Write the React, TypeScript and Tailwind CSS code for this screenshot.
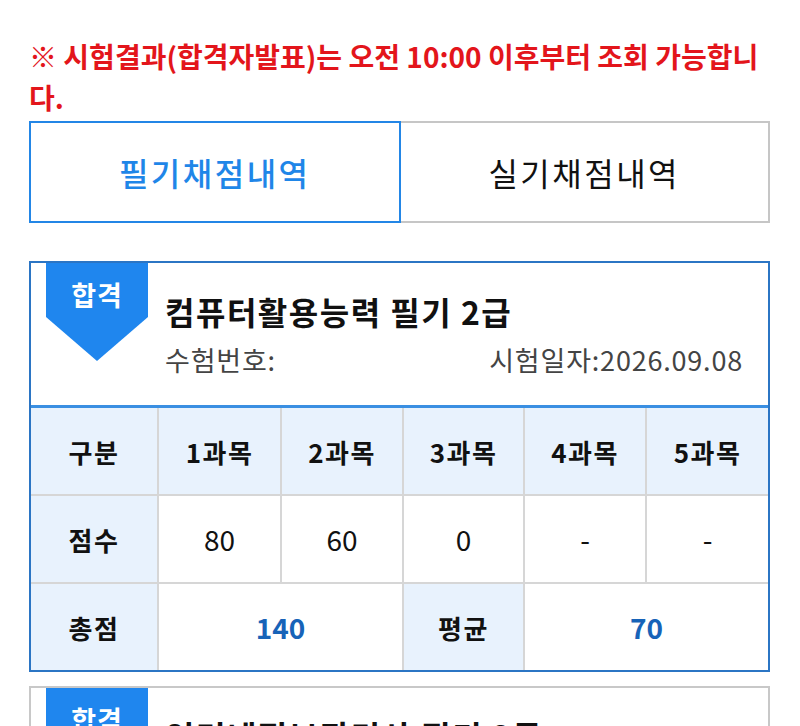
const font = { fontFamily: '"Noto Sans CJK KR", "Noto Sans", sans-serif' };

function Badge() {
  return (
    <div className="absolute left-[15px] top-0 w-[102px] h-[98px] bg-[#1f86ee] [clip-path:polygon(0_0,100%_0,100%_55%,50%_100%,0_55%)] flex justify-center">
      <span className="mt-[14px] text-[27px] leading-[36px] font-bold tracking-[1px] text-white">합격</span>
    </div>
  );
}

function ScoreTable() {
  const head = ['구분', '1과목', '2과목', '3과목', '4과목', '5과목'];
  const scores = ['80', '60', '0', '-', '-'];
  const cell = 'h-[86px] flex items-center justify-center';
  const label = 'bg-[#e8f2fd] text-[26px] font-bold tracking-[1.5px] text-[#111]';
  return (
    <div className="grid grid-cols-[126px_121px_120px_119px_120px_1fr] gap-[2px] bg-[#d6d6d6]">
      {head.map((h) => (
        <div key={h} className={`${cell} ${label}`}>
          {h}
        </div>
      ))}
      <div className={`${cell} ${label}`}>점수</div>
      {scores.map((s, i) => (
        <div key={i} className={`${cell} bg-white text-[28px] text-[#111]`}>
          {s}
        </div>
      ))}
      <div className={`${cell} ${label}`}>총점</div>
      <div className={`${cell} col-span-2 bg-white text-[28px] font-bold text-[#1763b8]`}>140</div>
      <div className={`${cell} ${label}`}>평균</div>
      <div className={`${cell} col-span-2 bg-white text-[28px] font-bold text-[#1763b8]`}>70</div>
    </div>
  );
}

export default function App() {
  return (
    <div style={font} className="bg-white pt-[36px] pl-[29px] pr-[30px] overflow-hidden h-[726px]">
      {/* Notice */}
      <p className="text-[28px] leading-[41px] font-bold text-[#e3151b] break-all">
        ※ 시험결과(합격자발표)는 오전 10:00 이후부터 조회 가능합니다.
      </p>

      {/* Tabs */}
      <div className="mt-[3px] flex h-[102px]">
        <button className="flex-1 border-2 border-[#2386e6] flex items-center justify-center text-[32px] tracking-[2.5px] font-medium text-[#1f86e8]">
          필기채점내역
        </button>
        <button className="flex-1 border-2 border-l-0 border-[#c6c6c6] flex items-center justify-center text-[32px] tracking-[2.5px] text-[#111]">
          실기채점내역
        </button>
      </div>

      {/* Result card */}
      <div className="mt-[38px] border-2 border-[#2b75c4]">
        <div className="relative pl-[134px] pr-[25px] pt-[27px] pb-[27px] border-b-[3px] border-[#3a8fe2]">
          <Badge />
          <h2 className="text-[32px] leading-[42px] font-bold tracking-[1.5px] text-[#111]">컴퓨터활용능력 필기 2급</h2>
          <div className="mt-[10px] flex justify-between text-[27px] leading-[36px] tracking-[0.8px] text-[#444]">
            <span>수험번호:</span>
            <span>시험일자:2026.09.08</span>
          </div>
        </div>
        <ScoreTable />
      </div>

      {/* Next card (cut off) */}
      <div className="mt-[14px] border-2 border-[#c8c8c8] h-[120px]">
        <div className="relative pl-[134px] pt-[26px]">
          <Badge />
          <h2 className="text-[32px] leading-[42px] font-bold tracking-[1.5px] text-[#111]">인터넷정보관리사 필기 2급</h2>
        </div>
      </div>
    </div>
  );
}
